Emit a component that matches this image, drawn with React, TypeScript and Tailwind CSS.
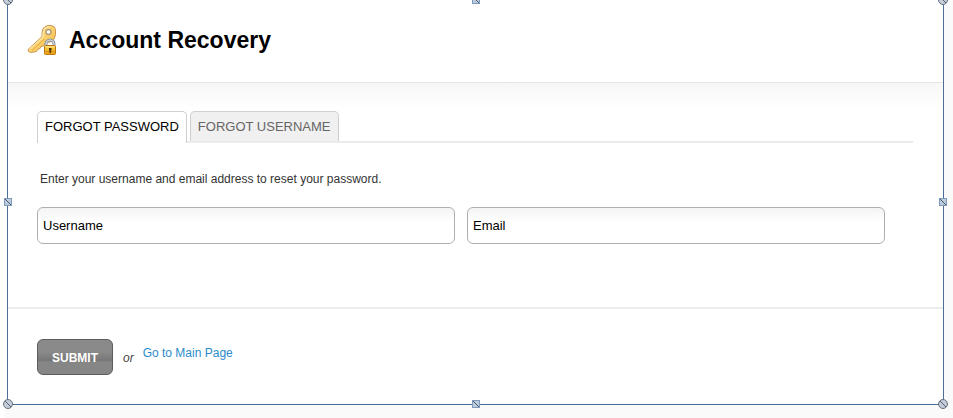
import { useState } from 'react'
import type { FormEvent } from 'react'
import clsx from 'clsx'

type Tab = 'password' | 'username'

const TABS: { id: Tab; label: string }[] = [
  { id: 'password', label: 'FORGOT PASSWORD' },
  { id: 'username', label: 'FORGOT USERNAME' },
]

const HANDLES = [
  { shape: 'round', position: 'left-0 top-0' },
  { shape: 'square', position: 'left-1/2 top-0' },
  { shape: 'round', position: 'left-full top-0' },
  { shape: 'square', position: 'left-0 top-1/2' },
  { shape: 'square', position: 'left-full top-1/2' },
  { shape: 'round', position: 'left-0 top-full' },
  { shape: 'square', position: 'left-1/2 top-full' },
  { shape: 'round', position: 'left-full top-full' },
]

function Handle({ shape, position }: { shape: string; position: string }) {
  return (
    <svg
      viewBox="0 0 11 11"
      className={clsx('absolute size-[11px] -translate-x-1/2 -translate-y-1/2', position)}
      aria-hidden="true"
    >
      {shape === 'round' ? (
        <>
          <circle cx="5.5" cy="5.5" r="4.5" fill="#c3ccd8" stroke="#66717f" />
          <path d="M2.5 2.5l6 6" stroke="#56606e" />
        </>
      ) : (
        <>
          <rect x="2" y="2" width="7" height="7" fill="#bccbdc" stroke="#7f9bbb" />
          <path d="M2.5 2.5l6 6" stroke="#4d5968" />
        </>
      )}
    </svg>
  )
}

function KeyIcon() {
  return (
    <svg viewBox="0 0 32 32" className="size-8 shrink-0" aria-hidden="true">
      <defs>
        <linearGradient id="key" x1="0" y1="0" x2="1" y2="1">
          <stop offset="0" stopColor="#ffe79a" />
          <stop offset="0.55" stopColor="#fbd06a" />
          <stop offset="1" stopColor="#eeb040" />
        </linearGradient>
        <linearGradient id="lock" x1="0" y1="0" x2="0" y2="1">
          <stop offset="0" stopColor="#fbd34c" />
          <stop offset="1" stopColor="#e99d12" />
        </linearGradient>
      </defs>
      <path
        d="M16 5q1.500-3 5-3.500h3q4 .500 4.500 4v5q-.500 4-3 6.500-2 1.500-5 1l-2.500 1.500-1.500 2.500-2.500.500-1 2-2.500 1-1 2-6 1q-2.500-.500-2.500-3L15 12.500q-.500-4 1-7.500z"
        fill="url(#key)"
        stroke="#cb9450"
        strokeLinejoin="round"
      />
      <path d="M2.500 25L16 13q-.500-6 2-8.500 2-2 5-2" fill="none" stroke="#fff1bd" />
      <path d="M5 26.500L17.500 15" fill="none" stroke="#e4a946" />
      <circle cx="21.500" cy="8" r="2.500" fill="#fff" stroke="#b79c76" strokeWidth="1.500" />
      <path d="M19 21.500V20a4 4 0 0 1 8 0v1.500" fill="none" stroke="#929aa3" strokeWidth="3" />
      <path d="M19 21.500V20a4 4 0 0 1 8 0v1.500" fill="none" stroke="#d6dade" />
      <rect x="17.500" y="21.500" width="11" height="9" rx="1" fill="url(#lock)" stroke="#bd7510" />
      <path d="M18.500 23h9" stroke="#ffe994" />
      <path d="M18.500 27.500h9" stroke="#d88c12" />
      <path d="M22 24h2.500v2l-.5.500V29h-1.500v-2.500L22 26z" fill="#4b3211" />
    </svg>
  )
}

function TextField({ label, type = 'text' }: { label: string; type?: string }) {
  return (
    <input
      type={type}
      aria-label={label}
      placeholder={label}
      className="h-[37px] min-w-0 flex-1 rounded-md border border-[#b0b0b0] bg-linear-to-b from-[#f4f4f4] to-white to-40% px-[5px] text-[13px] text-black placeholder:text-black"
    />
  )
}

export default function App() {
  const [tab, setTab] = useState<Tab>('password')

  const handleSubmit = (e: FormEvent) => {
    e.preventDefault()
  }

  return (
    <div className="overflow-hidden bg-linear-to-r from-white from-50% to-[#fafafa] to-50% font-['Liberation_Sans',Arial,sans-serif]">
      <div className="relative mr-[9px] ml-[7px] border-x border-b border-[#4a6f9c] bg-white">
        <header className="flex h-[83px] items-center gap-[10px] border-b border-[#e6e6e6] pb-[2px] pl-[19px]">
          <KeyIcon />
          <h1 className="text-[23px] leading-8 font-bold text-black">Account Recovery</h1>
        </header>

        <form onSubmit={handleSubmit}>
          <div className="h-[224px] bg-linear-to-b from-[#f7f7f7] to-white to-[26px] pt-7 pr-[30px] pl-[29px]">
            <div role="tablist" className="flex gap-[3px] border-b-2 border-[#ebebeb]">
              {TABS.map(({ id, label }) => (
                <button
                  key={id}
                  type="button"
                  role="tab"
                  aria-selected={tab === id}
                  onClick={() => setTab(id)}
                  className={clsx(
                    'rounded-t-[5px] border border-b-0 border-[#cfcfcf] px-[7px] pt-px text-[13px] leading-7',
                    tab === id ? '-mb-[2px] bg-white pb-[2px] text-black' : 'bg-[#f0f0f0] text-[#666]',
                  )}
                >
                  {label}
                </button>
              ))}
            </div>

            <p className="mt-7 pl-[3px] text-xs leading-4 text-[#333]">
              {tab === 'password'
                ? 'Enter your username and email address to reset your password.'
                : 'Enter your email address to recover your username.'}
            </p>

            <div className="mt-5 flex gap-3 pr-7">
              {tab === 'password' && <TextField label="Username" />}
              <TextField label="Email" type="email" />
            </div>
          </div>

          <footer className="flex items-start border-t-2 border-[#ebeeee] pt-[30px] pb-[29px] pl-[29px]">
            <button
              type="submit"
              className="h-9 w-[76px] rounded-md border border-[#5c5c5c] bg-linear-to-b from-[#8a8a8a] from-35% via-[#777] via-60% to-[#868686] to-65% pt-px text-xs font-bold text-white"
            >
              SUBMIT
            </button>
            <span className="ml-[10px] pt-[11px] text-xs leading-4 text-[#444] italic">or</span>
            <a href="#main" className="ml-[9px] pt-[6px] text-xs leading-4 text-[#2b8ccb]">
              Go to Main Page
            </a>
          </footer>
        </form>

        {HANDLES.map(({ shape, position }) => (
          <Handle key={position} shape={shape} position={position} />
        ))}
      </div>
      <div className="ml-[5px] h-[13px] bg-[#fafafa]" />
    </div>
  )
}
